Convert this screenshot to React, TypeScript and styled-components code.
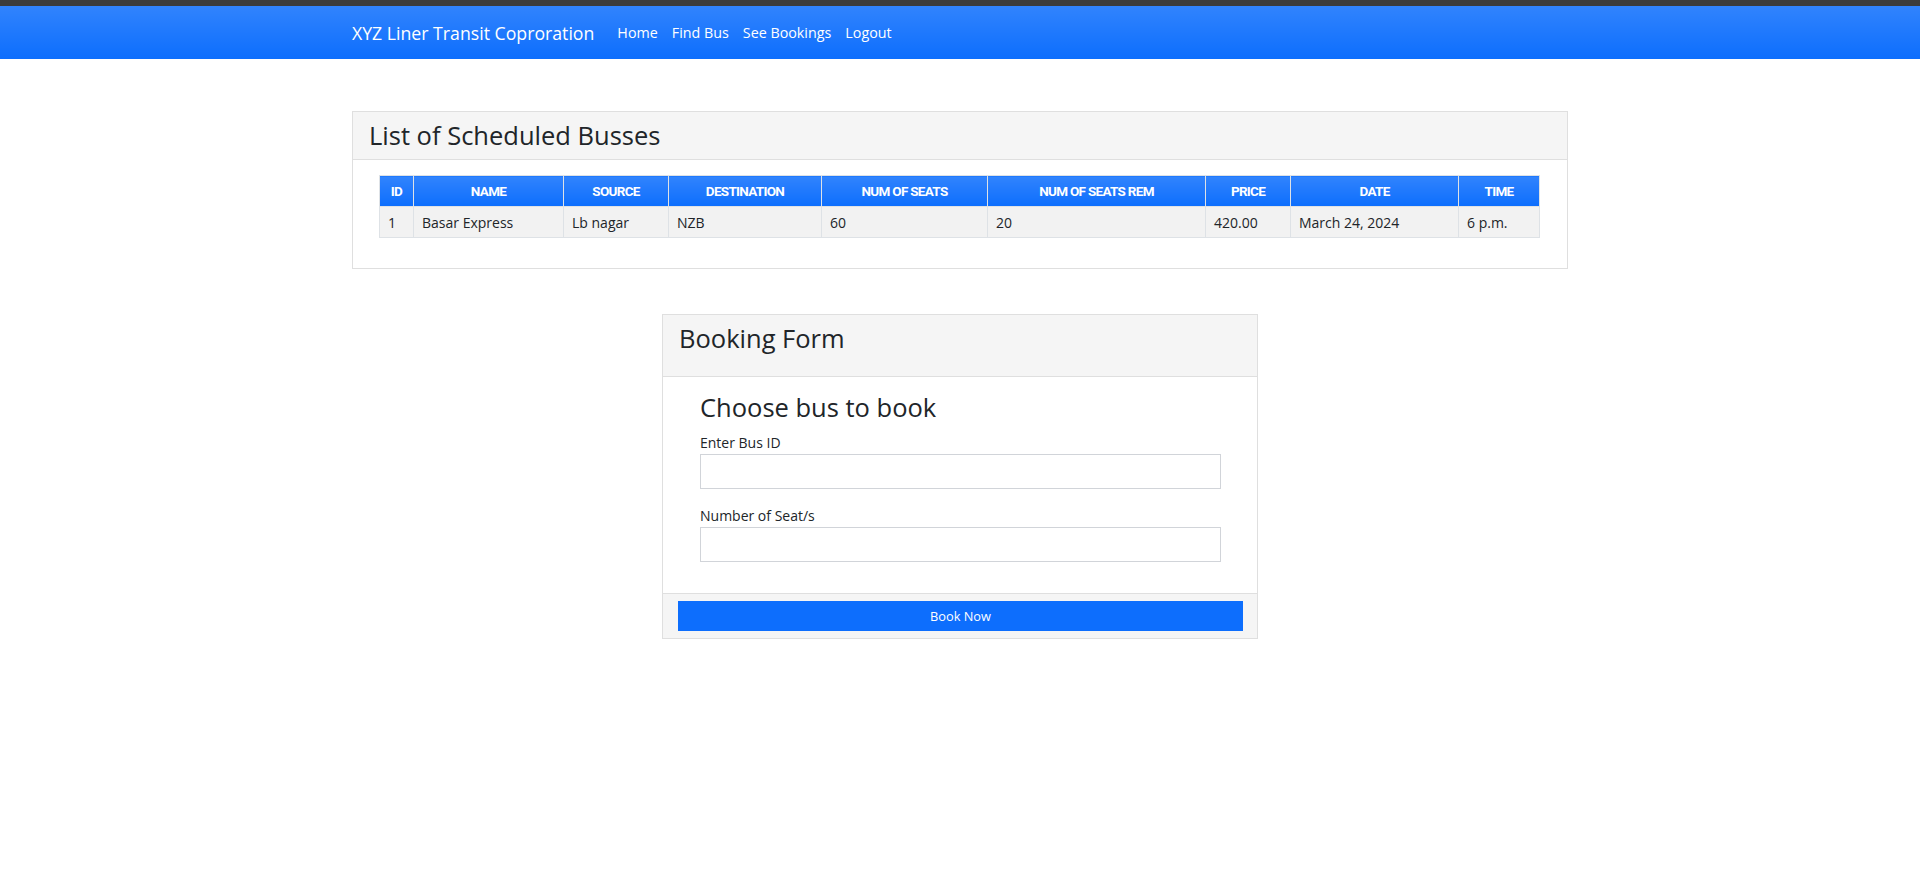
import React from 'react';
import styled, { createGlobalStyle } from 'styled-components';

const GlobalStyle = createGlobalStyle`
  * { box-sizing: border-box; }
  body {
    margin: 0;
    font-family: "Open Sans", "Noto Sans", sans-serif;
    color: #212529;
    background: #fff;
  }
`;

const TopStrip = styled.div`
  height: 6px;
  background: #3c3c3c;
`;

const NavBar = styled.nav`
  height: 53px;
  background: #0d6efd linear-gradient(180deg, rgba(255, 255, 255, 0.15), rgba(255, 255, 255, 0));
  display: flex;
  align-items: center;
`;

const NavInner = styled.div`
  width: 1216px;
  margin: 0 auto;
  display: flex;
  align-items: center;
`;

const Brand = styled.a`
  color: #fff;
  font-size: 17.7px;
  margin-right: 23px;
  text-decoration: none;
`;

const NavLinks = styled.div`
  display: flex;
  gap: 14px;
`;

const NavLink = styled.a`
  color: #fff;
  font-size: 14.3px;
  text-decoration: none;
`;

const Main = styled.main`
  width: 1216px;
  margin: 0 auto;
  padding-top: 52px;
`;

const Card = styled.section<{ $width?: number; $gap?: number }>`
  border: 1px solid #dfdfdf;
  background: #fff;
  width: ${(p) => (p.$width ? `${p.$width}px` : '100%')};
  margin: ${(p) => p.$gap ?? 0}px auto 0;
`;

const CardHeader = styled.div<{ $extra?: number }>`
  background: #f5f5f5;
  border-bottom: 1px solid #dfdfdf;
  padding: 8px 16px ${(p) => 8 + (p.$extra ?? 0)}px;
`;

const CardTitle = styled.h3`
  margin: 0;
  font-size: 25.5px;
  font-weight: 500;
  line-height: 31px;
`;

const TableBody = styled.div`
  padding: 15px 27px 30px 26px;
`;

const Table = styled.table`
  width: 1160px;
  border-collapse: collapse;
  table-layout: fixed;
  font-size: 14px;
`;

const Th = styled.th<{ $w: number }>`
  width: ${(p) => p.$w}px;
  height: 31px;
  padding: 0 4px;
  border: 1px solid #dee2e6;
  background: #0d6efd linear-gradient(180deg, rgba(255, 255, 255, 0.15), rgba(255, 255, 255, 0));
  color: #fff;
  font-family: Roboto, "Open Sans", sans-serif;
  font-size: 13.5px;
  letter-spacing: -0.7px;
  font-weight: 700;
  text-align: center;
  white-space: nowrap;
`;

const Td = styled.td`
  height: 31px;
  padding: 0 8px;
  border: 1px solid #dee2e6;
  background: #f2f2f2;
  text-align: left;
  white-space: nowrap;
`;

const FormBody = styled.div`
  padding: 16px 36px 31px 37px;
`;

const FormHeading = styled.h4`
  margin: 0 0 10px;
  font-size: 25.5px;
  font-weight: 500;
  line-height: 29px;
`;

const Field = styled.div`
  & + & {
    margin-top: 16px;
  }
`;

const Label = styled.label`
  display: block;
  font-size: 14px;
  line-height: 21px;
  margin-bottom: 1px;
`;

const Input = styled.input`
  display: block;
  width: 100%;
  height: 35px;
  border: 1px solid #d1d4d9;
  border-radius: 0;
  padding: 4px 10px;
  font: inherit;
  outline: none;
`;

const CardFooter = styled.div`
  background: #f5f5f5;
  border-top: 1px solid #dfdfdf;
  padding: 7px 14px 7px 15px;
`;

const PrimaryButton = styled.button`
  display: block;
  width: 100%;
  height: 30px;
  border: none;
  border-radius: 0;
  background: #0d6efd;
  color: #fff;
  font-family: inherit;
  font-size: 12.8px;
  cursor: pointer;
`;

const columns = [
  { label: 'ID', w: 34 },
  { label: 'NAME', w: 150 },
  { label: 'SOURCE', w: 105 },
  { label: 'DESTINATION', w: 153 },
  { label: 'NUM OF SEATS', w: 166 },
  { label: 'NUM OF SEATS REM', w: 218 },
  { label: 'PRICE', w: 85 },
  { label: 'DATE', w: 168 },
  { label: 'TIME', w: 81 },
];

const rows = [
  ['1', 'Basar Express', 'Lb nagar', 'NZB', '60', '20', '420.00', 'March 24, 2024', '6 p.m.'],
];

export default function App() {
  return (
    <>
      <GlobalStyle />
      <TopStrip />
      <NavBar>
        <NavInner>
          <Brand href="#">XYZ Liner Transit Coproration</Brand>
          <NavLinks>
            <NavLink href="#">Home</NavLink>
            <NavLink href="#">Find Bus</NavLink>
            <NavLink href="#">See Bookings</NavLink>
            <NavLink href="#">Logout</NavLink>
          </NavLinks>
        </NavInner>
      </NavBar>
      <Main>
        <Card>
          <CardHeader>
            <CardTitle>List of Scheduled Busses</CardTitle>
          </CardHeader>
          <TableBody>
            <Table>
              <thead>
                <tr>
                  {columns.map((c) => (
                    <Th key={c.label} $w={c.w}>
                      {c.label}
                    </Th>
                  ))}
                </tr>
              </thead>
              <tbody>
                {rows.map((r, i) => (
                  <tr key={i}>
                    {r.map((v, j) => (
                      <Td key={j}>{v}</Td>
                    ))}
                  </tr>
                ))}
              </tbody>
            </Table>
          </TableBody>
        </Card>

        <Card $width={596} $gap={45}>
          <CardHeader $extra={14}>
            <CardTitle>Booking Form</CardTitle>
          </CardHeader>
          <FormBody>
            <FormHeading>Choose bus to book</FormHeading>
            <Field>
              <Label htmlFor="busid">Enter Bus ID</Label>
              <Input id="busid" type="text" />
            </Field>
            <Field>
              <Label htmlFor="seats">Number of Seat/s</Label>
              <Input id="seats" type="text" />
            </Field>
          </FormBody>
          <CardFooter>
            <PrimaryButton type="button">Book Now</PrimaryButton>
          </CardFooter>
        </Card>
      </Main>
    </>
  );
}
